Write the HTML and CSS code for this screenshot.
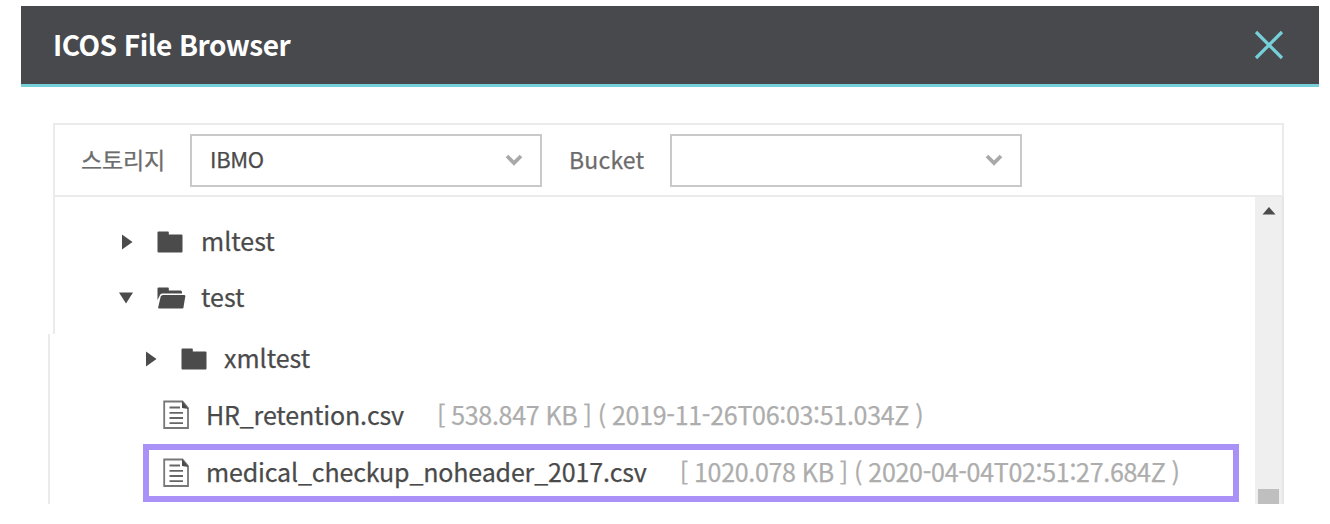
FILE: index.html
```html
<!DOCTYPE html>
<html lang="ko">
<head>
<meta charset="utf-8">
<title>ICOS File Browser</title>
<link rel="stylesheet" href="styles.css">
</head>
<body>
<svg class="defs" width="0" height="0">
  <symbol id="folder" viewBox="0 0 26 22"><path d="M1.500 .5h9.500q.8 0 .8.800v2.200H24.500q1 0 1 1V20.500q0 1-1 1H1.500q-1 0-1-1V1.500q0-1 1-1z"/></symbol>
  <symbol id="folder-open" viewBox="0 0 29 22"><path d="M1.500 .5h9.500q.8 0 .8.800v2.200H23.500q1.500 0 1.500 1.500V6.500H5Q3.500 6.500 3 8L.5 13V1.500q0-1 1-1z"/><path d="M6 8H27q1.500 0 1.300 1.300L26.500 20.300q-.2 1.200-1.400 1.200H2.200q-1.200 0-1-1.200L3.700 9.500Q4.200 8 6 8z"/></symbol>
  <symbol id="file" viewBox="0 0 26 30"><path class="page" d="M1.200 1.500H19.500L25 8V28H1.200z"/><path class="fold" d="M19 1l6.500 8L19 8z"/><path class="lines" d="M6.500 7.500h10.500M6.500 12.800h13.500M6.500 18h13.500M6.500 23.200h13.500"/></symbol>
  <symbol id="chevron" viewBox="0 0 18 12"><path d="M2 2l7 7 7-7"/></symbol>
</svg>
<main class="browser">
  <header class="header">
    <h1 class="title">ICOS File Browser</h1>
    <svg class="close" viewBox="0 0 30 30"><path d="M2 2l26 26M28 2L2 28"/></svg>
  </header>
  <section class="panel">
    <div class="toolbar">
      <span class="label storage-label">스토리지</span>
      <div class="select"><span>IBMO</span><svg class="chevron"><use href="#chevron"/></svg></div>
      <span class="label bucket-label">Bucket</span>
      <div class="select"><span></span><svg class="chevron"><use href="#chevron"/></svg></div>
    </div>
    <div class="content">
      <div class="tree">
        <div class="branch">
          <div class="row"><svg class="arrow" viewBox="0 0 14 16"><path d="M2 .5l10.500 7.500L2 15.500z"/></svg><svg class="folder"><use href="#folder"/></svg><span class="name">mltest</span></div>
          <div class="row"><svg class="arrow down" viewBox="0 0 16 12"><path d="M1 .5h14L8 11.500z"/></svg><svg class="folder open"><use href="#folder-open"/></svg><span class="name">test</span></div>
        </div>
        <div class="children">
          <div class="row subfolder"><svg class="arrow" viewBox="0 0 14 16"><path d="M2 .5l10.500 7.500L2 15.500z"/></svg><svg class="folder"><use href="#folder"/></svg><span class="name">xmltest</span></div>
          <div class="file-row"><svg class="file"><use href="#file"/></svg><span class="file-name">HR_retention.csv</span><span class="meta">[ 538.847 KB ] ( 2019-11-26T06:03:51.034Z )</span></div>
          <div class="file-row selected"><svg class="file"><use href="#file"/></svg><span class="file-name">medical_checkup_noheader_2017.csv</span><span class="meta">[ 1020.078 KB ] ( 2020-04-04T02:51:27.684Z )</span></div>
        </div>
      </div>
      <div class="scrollbar"><svg class="scroll-up" viewBox="0 0 14 8"><path d="M7 0l6.500 7.500H.5z"/></svg><div class="thumb"></div></div>
    </div>
  </section>
</main>
</body>
</html>
```
FILE: styles.css
```css
* { box-sizing: border-box; }
body { margin: 0; background: #fff; font-family: "Noto Sans CJK KR", sans-serif; color: #4a4a4a; overflow: hidden; }
svg { display: block; flex: none; }
span, h1 { white-space: nowrap; line-height: 40px; padding-bottom: 2px; }
span { -webkit-text-stroke: .25px currentColor; }
.defs { position: absolute; }
.browser { width: 1319px; padding: 6px 0 0 21px; }
.header { height: 81px; display: flex; align-items: center; justify-content: space-between; padding: 0 35px 0 32px; background: #48494d; border-bottom: 3px solid #76d0da; }
.title { margin: 0; font-size: 28px; font-weight: 700; letter-spacing: -.52px; color: #fff; }
.close { width: 30px; height: 30px; fill: none; stroke: #76d0da; stroke-width: 3.2; }
.panel { margin: 36px 35px 0 27px; }
.toolbar { height: 74px; margin-left: 5px; display: flex; align-items: center; padding-left: 26px; border: 2px solid #ebebeb; }
.label { font-size: 23px; color: #6c6c6c; }
.storage-label { width: 109px; letter-spacing: -.2px; }
.bucket-label { width: 128px; padding-left: 27px; letter-spacing: .2px; }
.select { width: 352px; height: 53px; display: flex; align-items: center; justify-content: space-between; padding: 0 17px 0 18px; border: 2px solid #c9c9c9; font-size: 22px; letter-spacing: -.3px; }
.select span { padding-bottom: 4px; }
.chevron { width: 18px; height: 12px; fill: none; stroke: #a9a9a9; stroke-width: 3.8; }
.content { height: 307px; display: flex; }
.tree { flex: 1; }
.branch { height: 137px; margin-left: 5px; padding: 17px 0 0 63px; border-left: 2px solid #ebebeb; }
.row { height: 56px; display: flex; align-items: center; }
.arrow { width: 14px; height: 16px; margin: 0 23px 0 2px; fill: #4b4b4b; }
.arrow.down { width: 16px; height: 12px; margin: 0 23px 0 0; }
.folder { width: 26px; height: 22px; fill: #4b4b4b; }
.folder.open { width: 29px; }
.name { font-size: 25px; margin-left: 18px; padding-bottom: 4px; }
.open + .name { margin-left: 15px; }
.children { height: 170px; border-left: 2px solid #ebebeb; }
.subfolder { height: 50px; padding-left: 92px; }
.subfolder .name { margin-left: 17px; }
.file-row { height: 58px; margin: 2px 16px 0 93px; display: flex; align-items: center; padding-left: 20px; }
.selected { margin-top: 0; padding-left: 14px; border: 6px solid #a991f7; }
.file-row span { padding-bottom: 3px; }
.selected span { padding-bottom: 5px; }
.file { width: 26px; height: 30px; }
.page { fill: #fff; stroke: #777; stroke-width: 1.8; }
.fold { fill: #4b4b4b; }
.lines { stroke: #666; stroke-width: 1.8; }
.file-name { font-size: 25px; margin-left: 17px; letter-spacing: -.15px; }
.meta { font-size: 25px; color: #adadad; margin-left: 33px; letter-spacing: -.3px; word-spacing: -.6px; }
.scrollbar { width: 29px; display: flex; flex-direction: column; align-items: center; justify-content: space-between; padding-top: 10px; background: #efefef; border-right: 2px solid #e6e6e6; }
.scroll-up { width: 14px; height: 8px; fill: #4b4b4b; }
.thumb { width: 21px; height: 15px; background: #bfbfbf; }
```
